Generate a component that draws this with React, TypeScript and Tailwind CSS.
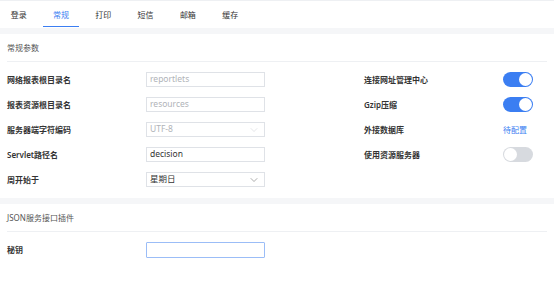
import { ChevronDown } from "lucide-react";

const FONT = { fontFamily: '"Noto Sans", "Noto Sans CJK SC", sans-serif' };
const TABS = ["登录", "常规", "打印", "短信", "邮箱", "缓存"];

function Toggle({ on }: { on: boolean }) {
  return (
    <div
      className={`relative h-[15px] w-[29.5px] rounded-full ${on ? "bg-[#3b7ef2]" : "bg-[#d7dadf]"}`}
    >
      <div
        className={`absolute top-[1px] h-[13px] w-[13px] rounded-full bg-white ${on ? "right-[1px]" : "left-[1px]"}`}
      />
    </div>
  );
}

function Field({ value, muted, select }: { value: string; muted?: boolean; select?: boolean }) {
  return (
    <div className="flex h-[15px] w-[119px] items-center justify-between border border-[#dfe2e7] bg-white px-[3px]">
      <span className={`text-[8.5px] leading-none ${muted ? "text-[#b0b3b8]" : "text-[#333]"}`}>{value}</span>
      {select && (
        <ChevronDown size={12} strokeWidth={1.1} className={muted ? "mr-[1px] text-[#cfd2d6]" : "mr-[1px] text-[#666]"} />
      )}
    </div>
  );
}

function Label({ children }: { children: React.ReactNode }) {
  return <span className="text-[8px] font-semibold leading-none text-[#333]">{children}</span>;
}

const LEFT: { label: string; value: string; muted?: boolean; select?: boolean }[] = [
  { label: "网络报表根目录名", value: "reportlets", muted: true },
  { label: "报表资源根目录名", value: "resources", muted: true },
  { label: "服务器端字符编码", value: "UTF-8", muted: true, select: true },
  { label: "Servlet路径名", value: "decision" },
  { label: "周开始于", value: "星期日", select: true },
];

export default function App() {
  return (
    <div style={FONT} className="h-[295px] w-[554px] overflow-hidden bg-white">
      {/* tab bar */}
      <div className="h-[1px] bg-[#eef0f3]" />
      <div className="flex h-[27px] gap-[6.3px] pl-[0.7px]">
        {TABS.map((t, i) => (
          <div key={t} className="relative flex w-[36px] items-center justify-center">
            <span className={`text-[8px] ${i === 1 ? "text-[#3b7ef2]" : "text-[#333]"}`}>{t}</span>
            {i === 1 && <div className="absolute bottom-[1px] left-0 h-[1.5px] w-[36px] bg-[#3b7ef2]" />}
          </div>
        ))}
      </div>
      <div className="h-[6px] bg-[#f5f6f8]" />

      {/* 常规参数 */}
      <div className="flex h-[27px] items-center px-[7px]">
        <span className="text-[8px] text-[#555]">常规参数</span>
      </div>
      <div className="mx-[7px] h-[1px] bg-[#eef0f3]" />
      <div className="flex flex-col gap-[10px] px-[7px] pb-[11px] pt-[10px]">
        {LEFT.map((r, i) => (
          <div key={r.label} className="grid h-[15px] grid-cols-[139px_119px_99px_139px_30px] items-center">
            <Label>{r.label}</Label>
            <Field value={r.value} muted={r.muted} select={r.select} />
            <div />
            {i === 0 && <Label>连接网址管理中心</Label>}
            {i === 0 && <Toggle on />}
            {i === 1 && <Label>Gzip压缩</Label>}
            {i === 1 && <Toggle on />}
            {i === 2 && <Label>外接数据库</Label>}
            {i === 2 && <span className="text-[8px] leading-none text-[#3b7ef2]">待配置</span>}
            {i === 3 && <Label>使用资源服务器</Label>}
            {i === 3 && <Toggle on={false} />}
          </div>
        ))}
      </div>
      <div className="h-[6px] bg-[#f5f6f8]" />

      {/* JSON服务接口插件 */}
      <div className="flex h-[27px] items-center px-[7px]">
        <span className="text-[8px] text-[#555]">JSON服务接口插件</span>
      </div>
      <div className="mx-[7px] h-[1px] bg-[#eef0f3]" />
      <div className="px-[7px] pt-[10px]">
        <div className="grid h-[16px] grid-cols-[139px_119px] items-center">
          <Label>秘钥</Label>
          <div className="h-[16px] w-[119px] rounded-[1px] border-[1.5px] border-[#9bbdf7] bg-white" />
        </div>
      </div>
    </div>
  );
}
